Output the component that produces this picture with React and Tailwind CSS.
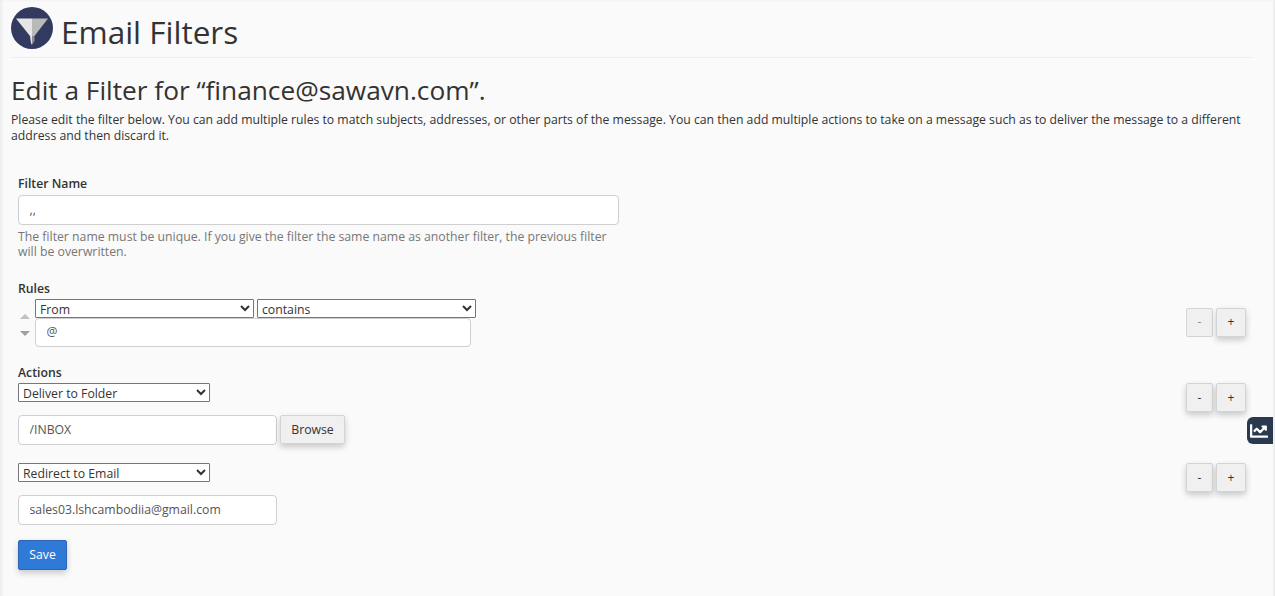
import { FaChartLine } from 'react-icons/fa';

const FONT = { fontFamily: '"Open Sans", sans-serif' };

function StepButtons({ muted }) {
  return (
    <div className={`flex gap-[3px] ${muted ? 'mb-[2px]' : ''}`}>
      <button type="button" className={`w-[27px] h-[29px] rounded-[2px] border border-[#d4d4d4] bg-[#f0f0f0] text-[12px] leading-none ${muted ? 'text-[#8a8a8a]' : 'text-[#333] shadow-[0_3px_6px_rgba(0,0,0,0.2)]'}`}>
        -
      </button>
      <button type="button" className="w-[30px] h-[29px] rounded-[2px] border border-[#d4d4d4] bg-[#f0f0f0] text-[12px] leading-none text-[#333] shadow-[0_3px_6px_rgba(0,0,0,0.2)]">
        +
      </button>
    </div>
  );
}

function TextBox({ value, className }) {
  return (
    <input
      readOnly
      value={value}
      className={`block rounded-[4px] border border-[#cfcfcf] bg-white px-[10.5px] pb-[2px] text-[12.25px] text-[#555] outline-none ${className}`}
    />
  );
}

function Dropdown({ value, className }) {
  return (
    <select
      defaultValue={value}
      className={`block h-[19px] border border-[#767676] rounded-[1px] bg-white text-[12.25px] text-[#333] ${className}`}
    >
      <option>{value}</option>
    </select>
  );
}

function FunnelLogo() {
  return (
    <svg width="42" height="42" viewBox="0 0 42 42" className="shrink-0">
      <circle cx="21" cy="21" r="21" fill="#323b5f" />
      <path d="M5 11.5 H21 V29 H19 Z" fill="#e6e6e6" />
      <path d="M21 11.5 H37 L23.5 29 H21 Z" fill="#b9b9b9" />
      <path d="M19 29 H21 V38 L20 36 Z" fill="#e6e6e6" />
      <path d="M21 29 H23.5 V34 L21 38 Z" fill="#8f8f8f" />
    </svg>
  );
}

export default function App() {
  return (
    <div style={FONT} className="relative w-[1275px] h-[596px] overflow-hidden bg-[#fafafa] text-[#333] shadow-[inset_3px_1px_3px_-1px_rgba(0,0,0,0.06)]">
      <div className="pl-[11px] pr-[22px]">
        <div className="flex items-start gap-[8px] h-[58px] pt-[7px] border-b border-[#eeeeee]">
          <FunnelLogo />
          <h1 className="text-[31.5px] leading-[38px] text-[#333] mt-[6px]">Email Filters</h1>
        </div>
        <h2 className="mt-[14px] text-[26.25px] leading-[36px] text-[#333]">Edit a Filter for “finance@sawavn.com”.</h2>
        <p className="mt-[4px] text-[12.22px] leading-[16px] text-[#333]">
          Please edit the filter below. You can add multiple rules to match subjects, addresses, or other parts of the message. You can then add multiple actions to take on a message such as to deliver the message to a different address and then discard it.
        </p>

        <form className="mt-[31px] pl-[7px] pr-[7px]">
          <label className="block text-[12.25px] leading-[17px] font-semibold text-[#333]">Filter Name</label>
          <TextBox value=",," className="mt-[3px] w-[601px] h-[30px]" />
          <p className="mt-[4px] w-[601px] text-[12.25px] leading-[15px] text-[#777]">
            The filter name must be unique. If you give the filter the same name as another filter, the previous filter will be overwritten.
          </p>

          <label className="block mt-[21px] text-[12.25px] leading-[17px] font-semibold text-[#333]">Rules</label>
          <div className="flex items-center justify-between mt-[2px]">
            <div className="flex items-center">
              <div className="flex flex-col gap-[12px] w-[17px] pl-[2px] pt-[4px]">
                <span className="w-0 h-0 border-x-[5px] border-x-transparent border-b-[5px] border-b-[#c0c0c0]" />
                <span className="w-0 h-0 border-x-[5px] border-x-transparent border-t-[5px] border-t-[#a0a0a0]" />
              </div>
              <div>
                <div className="flex gap-[3px]">
                  <Dropdown value="From" className="w-[219px]" />
                  <Dropdown value="contains" className="w-[219px]" />
                </div>
                <TextBox value="@" className="w-[436px] h-[29px]" />
              </div>
            </div>
            <StepButtons muted />
          </div>

          <label className="block mt-[17px] text-[12.25px] leading-[17px] font-semibold text-[#333]">Actions</label>
          <div className="flex items-start justify-between mt-[2px]">
            <Dropdown value="Deliver to Folder" className="w-[192px]" />
            <StepButtons />
          </div>
          <div className="flex gap-[3px] mt-[3px]">
            <TextBox value="/INBOX" className="w-[259px] h-[30px]" />
            <button type="button" className="w-[65px] h-[29px] pt-[1px] rounded-[2px] border border-[#d4d4d4] bg-[#f0f0f0] text-[12.25px] text-[#333] shadow-[0_3px_6px_rgba(0,0,0,0.2)]">
              Browse
            </button>
          </div>

          <div className="flex items-start justify-between mt-[18px]">
            <Dropdown value="Redirect to Email" className="w-[192px]" />
            <StepButtons />
          </div>
          <TextBox value="sales03.lshcambodiia@gmail.com" className="mt-[3px] w-[259px] h-[30px]" />

          <button type="button" className="block mt-[15px] w-[49px] h-[30px] pt-[1px] rounded-[2px] border border-[#2a66b5] bg-[#2f7ad6] text-[12.25px] text-white shadow-[0_3px_6px_rgba(0,0,0,0.2)]">
            Save
          </button>
        </form>
      </div>

      {/* floating stats tab on the right edge */}
      <div className="absolute left-[1247px] top-[417px] w-[26px] h-[27px] pr-[2px] rounded-l-[6px] bg-[#293a4e] flex items-center justify-center text-white">
        <FaChartLine size={18} />
      </div>
      <div className="absolute right-0 top-0 w-[2px] h-full bg-[#eeeeee]" />
    </div>
  );
}
